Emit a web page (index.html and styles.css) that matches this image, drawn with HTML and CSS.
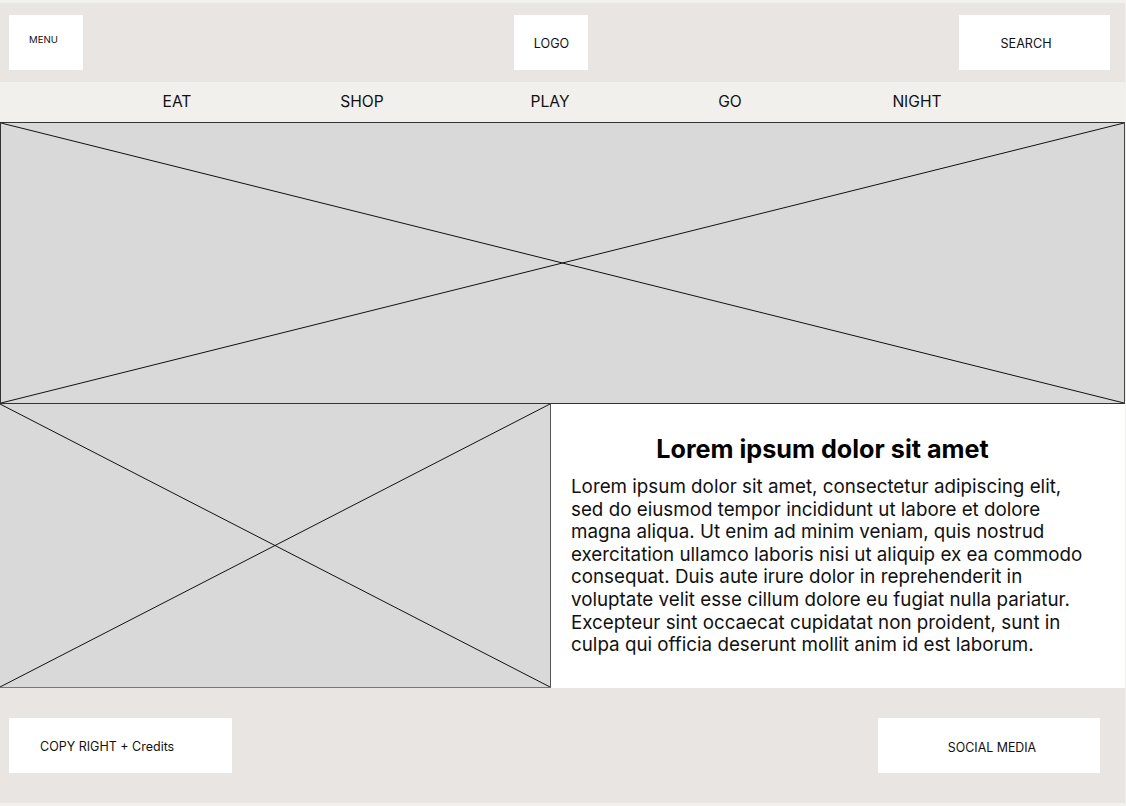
FILE: index.html
```html
<!DOCTYPE html>
<html lang="en">
<head>
<meta charset="utf-8">
<title>Wireframe</title>
<link rel="stylesheet" href="styles.css">
</head>
<body>
<div class="page">
  <header class="header">
    <div class="box box-menu">MENU</div>
    <div class="box box-logo">LOGO</div>
    <div class="box box-search">SEARCH</div>
  </header>
  <nav class="nav">
    <a class="nav-item">EAT</a>
    <a class="nav-item">SHOP</a>
    <a class="nav-item">PLAY</a>
    <a class="nav-item">GO</a>
    <a class="nav-item">NIGHT</a>
  </nav>
  <section class="hero placeholder">
    <svg class="cross" viewBox="0 0 100 100" preserveAspectRatio="none">
      <line x1="0" y1="0" x2="100" y2="100" vector-effect="non-scaling-stroke"/>
      <line x1="0" y1="100" x2="100" y2="0" vector-effect="non-scaling-stroke"/>
    </svg>
  </section>
  <section class="feature">
    <div class="feature-img placeholder">
      <svg class="cross" viewBox="0 0 100 100" preserveAspectRatio="none">
        <line x1="0" y1="0" x2="100" y2="100" vector-effect="non-scaling-stroke"/>
        <line x1="0" y1="100" x2="100" y2="0" vector-effect="non-scaling-stroke"/>
      </svg>
    </div>
    <div class="feature-text">
      <h1 class="title">Lorem ipsum dolor sit amet</h1>
      <p class="body-text">Lorem ipsum dolor sit amet, consectetur adipiscing elit, sed do eiusmod tempor incididunt ut labore et dolore magna aliqua. Ut enim ad minim veniam, quis nostrud exercitation ullamco laboris nisi ut aliquip ex ea commodo consequat. Duis aute irure dolor in reprehenderit in voluptate velit esse cillum dolore eu fugiat nulla pariatur. Excepteur sint occaecat cupidatat non proident, sunt in culpa qui officia deserunt mollit anim id est laborum.</p>
    </div>
  </section>
  <footer class="footer">
    <div class="box box-copy">COPY RIGHT + Credits</div>
    <div class="box box-social">SOCIAL MEDIA</div>
  </footer>
</div>
</body>
</html>
```

FILE: styles.css
```css
* { box-sizing: border-box; }
html, body { margin: 0; padding: 0; }
body {
  background: #f3f1ee;
  font-family: Inter, "Liberation Sans", Arial, sans-serif;
  color: #111;
  padding: 3px 0;
}
.page {
  width: 1125px;
  display: flex;
  flex-direction: column;
}
.header {
  height: 79px;
  background: #e8e5e2;
  display: grid;
  grid-template-columns: 505px 74px 1fr;
  align-items: start;
  padding: 12px 15px 0 9px;
}
.box {
  background: #fff;
  height: 55px;
  display: flex;
  align-items: center;
  justify-content: center;
  font-size: 12.6px;
  color: #111;
}
.box-menu {
  width: 74px;
  font-size: 9.6px;
  padding-bottom: 6px;
  padding-right: 5px;
}
.box-logo {
  grid-column: 2;
  padding-top: 2px;
  padding-left: 1px;
}
.box-search {
  grid-column: 3;
  justify-self: end;
  width: 151px;
  padding-right: 17px;
  padding-top: 2px;
}
.nav {
  height: 40px;
  background: #f2f0ed;
  display: grid;
  grid-template-columns: 186px 184px 192px 168px 206px;
  align-items: center;
  padding-left: 84px;
}
.nav-item {
  text-align: center;
  font-size: 15.6px;
  color: #111;
  padding-bottom: 1px;
}
.placeholder {
  position: relative;
  background: #d9d9d9;
}
.cross {
  position: absolute;
  inset: 0;
  width: 100%;
  height: 100%;
}
.cross line {
  stroke: #111;
  stroke-width: 1;
}
.hero {
  height: 282px;
  border: 1px solid #333;
  border-right-color: #444;
}
.feature {
  height: 284px;
  display: flex;
}
.feature-img {
  width: 551px;
  flex: none;
  border-right: 1px solid #555;
  border-bottom: 1px solid #777;
}
.feature-text {
  flex: 1;
  background: #fff;
  padding: 31px 39px 0 20px;
}
.title {
  margin: 0 12px 12px 0;
  font-size: 25.2px;
  line-height: 29px;
  font-weight: 700;
  text-align: center;
  color: #000;
}
.body-text {
  margin: 0;
  font-size: 18.8px;
  line-height: 22.6px;
  color: #111;
}
.footer {
  height: 115px;
  background: #e8e5e2;
  display: flex;
  justify-content: space-between;
  align-items: flex-start;
  padding: 30px 25px 0 9px;
}
.box-copy {
  width: 223px;
  justify-content: flex-start;
  padding-left: 31px;
  padding-top: 2px;
  font-size: 12.5px;
}
.box-social {
  width: 222px;
  font-size: 12.4px;
  padding-left: 6px;
  padding-top: 4px;
}
```
